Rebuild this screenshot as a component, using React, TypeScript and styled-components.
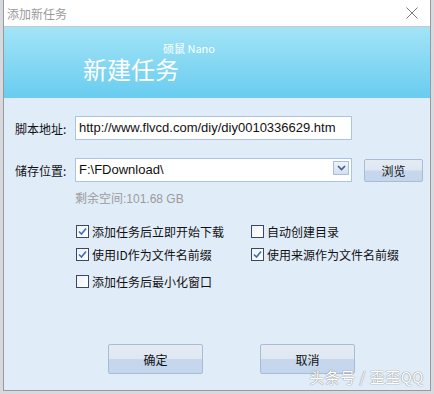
import React from "react"
import styled, { createGlobalStyle } from "styled-components"

const GlobalStyle = createGlobalStyle`
  html, body {
    margin: 0;
    padding: 0;
    background: #d6d9dd;
  }
  body {
    font-family: "Noto Sans CJK SC", "Liberation Sans", sans-serif;
    width: 434px;
    height: 394px;
    overflow: hidden;
  }
`

const FONT = `"Liberation Sans", "Noto Sans CJK SC", sans-serif`

function CheckMark() {
  return (
    <svg width="11" height="11" viewBox="0 0 11 11">
      <path
        d="M2 5.5 L4.5 8 L9 2.5"
        fill="none"
        stroke="#3a6fc0"
        strokeWidth="1.6"
      />
    </svg>
  )
}

function Option({ checked, children }: { checked?: boolean; children: React.ReactNode }) {
  return (
    <OptionRow>
      <Box>{checked && <CheckMark />}</Box>
      <span>{children}</span>
    </OptionRow>
  )
}

function App() {
  return (
    <>
      <GlobalStyle />
      <Dialog>
        <TitleBar>
          <Title>添加新任务</Title>
          <svg width="12" height="12" viewBox="0 0 12 12">
            <path d="M0.5 0.5 L11.5 11.5 M11.5 0.5 L0.5 11.5" stroke="#7a7a7a" strokeWidth="1" />
          </svg>
        </TitleBar>
        <Banner>
          <Brand>硕鼠 Nano</Brand>
          <BannerTitle>新建任务</BannerTitle>
        </Banner>
        <Body>
          <FormGrid>
            <Label>脚本地址:</Label>
            <Field>http://www.flvcd.com/diy/diy0010336629.htm</Field>
            <span />
            <Label>储存位置:</Label>
            <Field>
              F:\FDownload\
              <DropButton>
                <svg width="9" height="6" viewBox="0 0 9 6">
                  <path d="M1 1 L4.5 4.5 L8 1" fill="none" stroke="#3d5f8c" strokeWidth="1.6" />
                </svg>
              </DropButton>
            </Field>
            <SmallButton>浏览</SmallButton>
            <span />
            <FreeSpace>剩余空间:101.68 GB</FreeSpace>
          </FormGrid>
          <Options>
            <Option checked>添加任务后立即开始下载</Option>
            <Option>自动创建目录</Option>
            <Option checked>使用ID作为文件名前缀</Option>
            <Option checked>使用来源作为文件名前缀</Option>
            <Option>添加任务后最小化窗口</Option>
          </Options>
          <Actions>
            <BigButton>确定</BigButton>
            <BigButton>取消</BigButton>
          </Actions>
          <Watermark>头条号 / 歪歪QQ</Watermark>
        </Body>
      </Dialog>
    </>
  )
}

export default App

const Dialog = styled.div`
  margin: 0 3px;
  width: 426px;
  height: 390px;
  border: 1px solid #9a9a9a;
  border-top: none;
  background: #e1ecf9;
  display: flex;
  flex-direction: column;
  overflow: hidden;
`
const TitleBar = styled.div`
  height: 26px;
  background: #fff;
  display: flex;
  align-items: center;
  justify-content: space-between;
  padding: 0 12px 0 3px;
  margin: 0 -1px;
  border-left: 1px solid #9a9a9a;
  border-right: 1px solid #9a9a9a;
`
const Title = styled.div`
  font-size: 12px;
  color: #9a9a9a;
`
const Banner = styled.div`
  height: 72px;
  border-top: 1px solid #c9c9c9;
  background: linear-gradient(#a3e4f7, #69ccef);
  padding: 15px 0 0 79px;
  box-sizing: border-box;
  display: flex;
  flex-direction: column;
  gap: 1px;
`
const Brand = styled.div`
  margin-left: 80px;
  font-size: 11px;
  line-height: 13px;
  color: #fff;
`
const BannerTitle = styled.div`
  font-size: 24px;
  line-height: 26px;
  color: #fff;
`
const Body = styled.div`
  flex: 1;
  position: relative;
  padding: 18px 0 0 11px;
`
const FormGrid = styled.div`
  display: grid;
  grid-template-columns: 48px 277px 59px;
  column-gap: 12px;
  row-gap: 18px;
  align-items: center;
`
const Label = styled.div`
  font-size: 12px;
  color: #111;
  white-space: nowrap;
`
const Field = styled.div`
  position: relative;
  height: 24px;
  box-sizing: border-box;
  border: 1px solid #a8c4e6;
  background: #fff;
  font-family: ${FONT};
  font-size: 13px;
  line-height: 22px;
  padding-left: 3px;
  color: #111;
  white-space: nowrap;
`
const DropButton = styled.div`
  position: absolute;
  right: 2px;
  top: 2px;
  width: 14px;
  height: 12px;
  border: 1px solid #a7bfdc;
  background: linear-gradient(#eef3fa, #d3e0f0);
  display: flex;
  align-items: center;
  justify-content: center;
`
const ButtonBase = styled.div`
  box-sizing: border-box;
  border: 1px solid #a9bcd6;
  border-radius: 2px;
  background: linear-gradient(#e4ebf4 0%, #dfe7f2 48%, #c6d7ec 52%, #c4d6ec 100%);
  display: flex;
  align-items: center;
  justify-content: center;
  font-size: 12px;
  color: #111;
`
const SmallButton = styled(ButtonBase)`
  height: 23px;
`
const BigButton = styled(ButtonBase)`
  width: 95px;
  height: 30px;
`
const FreeSpace = styled.div`
  grid-column: 2 / 4;
  margin-top: -11px;
  font-family: ${FONT};
  font-size: 12px;
  color: #9b9b9b;
`
const Options = styled.div`
  margin: 16px 0 0 61px;
  display: grid;
  grid-template-columns: 175px 175px;
  row-gap: 5px;
`
const OptionRow = styled.div`
  display: flex;
  align-items: center;
  gap: 3px;
  font-size: 12px;
  color: #111;
  height: 18px;
  &:last-child {
    margin-top: 4px;
  }
`
const Box = styled.div`
  width: 13px;
  height: 13px;
  box-sizing: border-box;
  border: 1px solid #3b4766;
  background: linear-gradient(135deg, #eef1f5, #fff);
  display: flex;
  align-items: center;
  justify-content: center;
`
const Actions = styled.div`
  display: flex;
  gap: 57px;
  margin: 54px 0 0 93px;
`
const Watermark = styled.div`
  position: absolute;
  right: 6px;
  bottom: 3px;
  font-size: 15px;
  color: #fff;
  text-shadow: 0 0 1px #888, 0 0 1px #888;
  letter-spacing: 0.5px;
`
